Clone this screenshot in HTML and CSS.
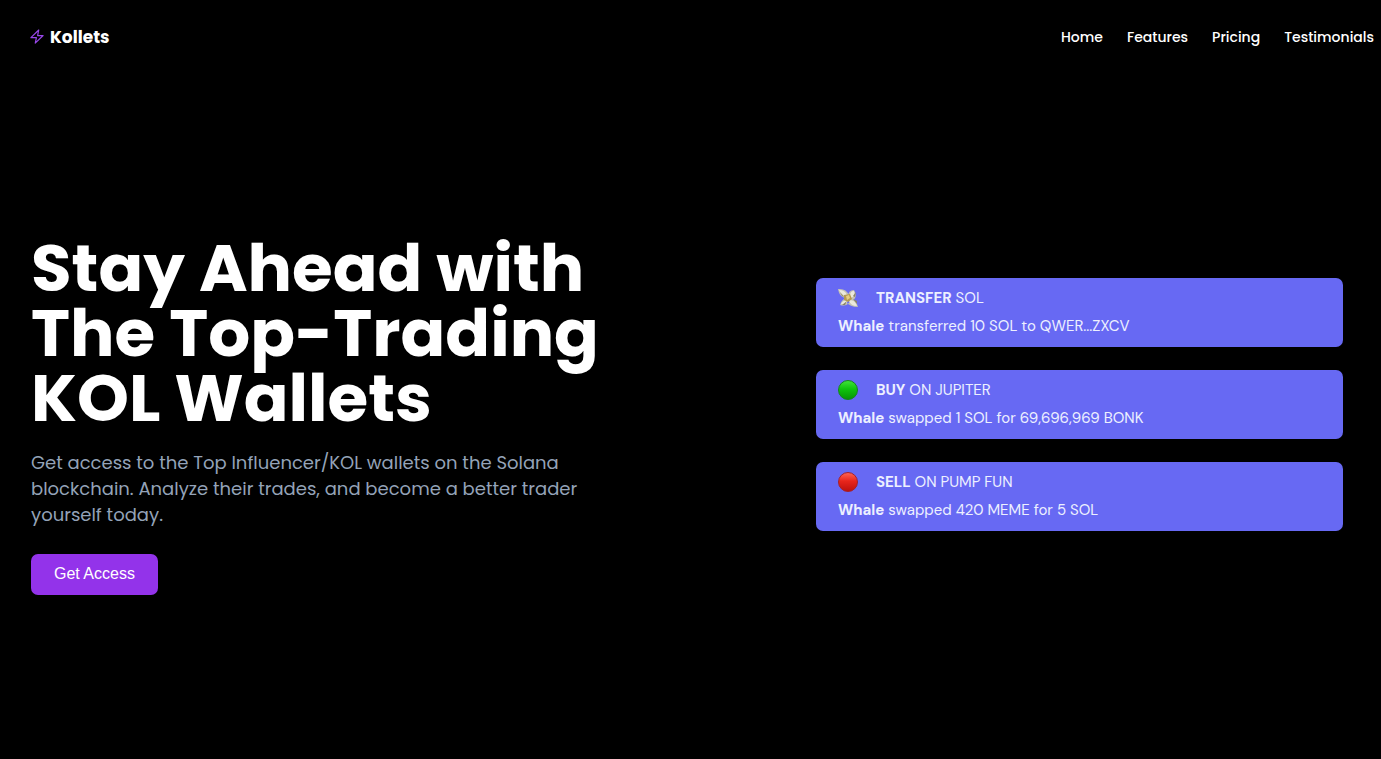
FILE: index.html
```html
<!DOCTYPE html>
<html lang="en">
<head>
<meta charset="utf-8">
<meta name="viewport" content="width=device-width, initial-scale=1">
<title>Kollets</title>
<link rel="stylesheet" href="styles.css">
</head>
<body>
<header class="header">
  <a class="brand" href="#">
    <svg class="brand-icon" viewBox="0 0 24 24" aria-hidden="true"><path d="M15 0 1.500 13H11L9 22.500 22.500 9.500H13Z"/></svg>
    <span>Kollets</span>
  </a>
  <nav class="nav" aria-label="Main">
    <a href="#home">Home</a>
    <a href="#features">Features</a>
    <a href="#pricing">Pricing</a>
    <a href="#testimonials">Testimonials</a>
  </nav>
</header>
<main class="hero" id="home">
  <section class="intro">
    <h1 class="title">Stay Ahead with<br>The Top-Trading<br>KOL Wallets</h1>
    <p class="lead">Get access to the Top Influencer/KOL wallets on the Solana<br>blockchain. Analyze their trades, and become a better trader<br>yourself today.</p>
    <button class="cta" type="button">Get Access</button>
  </section>
  <section class="feed" aria-label="Wallet activity">
    <article class="card">
      <div class="card-head">
        <svg class="card-icon" viewBox="0 0 20 20" aria-hidden="true">
          <path fill="#c3c1b4" d="M9 10C4 10 1 7 0 1q8-1 11 6ZM10 9q0-7 6-7 4 6-1 11ZM10 10q-6 0-8 7 7 2 10-4ZM10 11q8-2 10 8-8 0-12-5Z"/>
          <path fill="#ebe9dc" d="M8 8Q3 7 1 2q6 0 8 5ZM12 8q0-5 4-5 2 5-3 7ZM8 12q-4 1-5 4 5 1 7-3ZM12 12q5 0 7 6-6 0-8-5Z"/>
          <path fill="#8a8368" d="m2 4 4 5-2-1ZM4 17l5-4-2 4ZM19 13l-4-2 4 5ZM15 8l3-4-1 5Z"/>
          <path fill="#b59a53" d="m6 7 6-1 2 5-4 3-4-2Z"/>
          <path fill="#e6ce83" d="m8 8 3-1 1 3-3 2Z"/>
        </svg>
        <h2 class="card-title"><strong>TRANSFER</strong> SOL</h2>
      </div>
      <p class="card-text"><strong>Whale</strong> transferred 10 SOL to QWER...ZXCV</p>
    </article>
    <article class="card">
      <div class="card-head">
        <svg class="card-icon" viewBox="0 0 20 20" aria-hidden="true">
          <defs><linearGradient id="green" x2="0" y2="1"><stop stop-color="#42e43a"/><stop offset=".45" stop-color="#0fc40d"/><stop offset="1" stop-color="#079306"/></linearGradient></defs>
          <circle cx="10" cy="10" r="9.500" fill="url(#green)" stroke="#16831f"/>
        </svg>
        <h2 class="card-title"><strong>BUY</strong> ON JUPITER</h2>
      </div>
      <p class="card-text"><strong>Whale</strong> swapped 1 SOL for 69,696,969 BONK</p>
    </article>
    <article class="card">
      <div class="card-head">
        <svg class="card-icon" viewBox="0 0 20 20" aria-hidden="true">
          <defs><linearGradient id="red" x2="0" y2="1"><stop stop-color="#ff6654"/><stop offset=".45" stop-color="#e8251c"/><stop offset="1" stop-color="#bd100d"/></linearGradient></defs>
          <circle cx="10" cy="10" r="9.500" fill="url(#red)" stroke="#a3222d"/>
        </svg>
        <h2 class="card-title"><strong>SELL</strong> ON PUMP FUN</h2>
      </div>
      <p class="card-text"><strong>Whale</strong> swapped 420 MEME for 5 SOL</p>
    </article>
  </section>
</main>
</body>
</html>
```
FILE: styles.css
```css
* {
  box-sizing: border-box;
}

body {
  margin: 0;
  min-height: 100vh;
  display: flex;
  flex-direction: column;
  background: #000;
  color: #fff;
  font-family: Poppins, Inter, sans-serif;
}

h1,
h2,
p {
  margin: 0;
}

a {
  color: inherit;
  text-decoration: none;
}

.header {
  display: flex;
  align-items: center;
  justify-content: space-between;
  height: 74px;
  padding: 0 7px 0 30px;
}

.brand {
  display: flex;
  align-items: center;
  gap: 6px;
  font-size: 17px;
  font-weight: 700;
}

.brand-icon {
  width: 14px;
  height: 16px;
  fill: none;
  stroke: #9747e8;
  stroke-width: 2;
  stroke-linejoin: round;
  overflow: visible;
}

.nav {
  display: flex;
  gap: 24px;
  font-size: 14px;
  font-weight: 500;
}

.hero {
  flex: 1;
  display: grid;
  grid-template-columns: minmax(0, 785px) minmax(0, 1fr);
  align-items: center;
  padding: 0 38px 2px 31px;
}

.title {
  font-size: 66px;
  line-height: 65px;
  font-weight: 700;
}

.lead {
  margin-top: 19px;
  color: #94a3b8;
  font-size: 18px;
  line-height: 26px;
}

.cta {
  margin-top: 26px;
  height: 41px;
  padding: 0 23px 2px;
  border: 0;
  border-radius: 7px;
  background: #9333ea;
  color: #fff;
  font: 16px "Liberation Sans", Arial, sans-serif;
}

.feed {
  display: flex;
  flex-direction: column;
  gap: 23px;
  padding-bottom: 22px;
}

.card {
  padding: 8px 22px 9px;
  border-radius: 7px;
  background: #6769f3;
  color: #edf0ff;
  font-family: "DM Sans", Inter, sans-serif;
}

.card-head {
  display: flex;
  align-items: center;
  gap: 18px;
}

.card-icon {
  width: 20px;
  height: 20px;
}

.card-title {
  font-size: 15px;
  line-height: 24px;
  font-weight: 400;
}

.card-text {
  margin-top: 4px;
  font-size: 15px;
  line-height: 24px;
  font-weight: 400;
}

.card strong {
  font-weight: 700;
}

@media (max-width: 900px) {
  .hero {
    grid-template-columns: 1fr;
    gap: 40px;
  }
}
```
